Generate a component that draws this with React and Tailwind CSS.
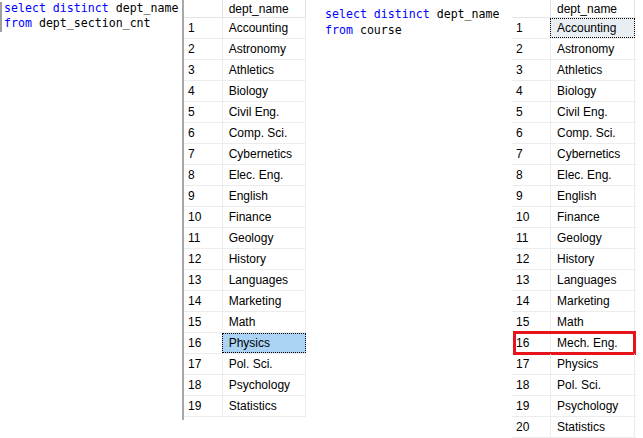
import React from "react";

const leftRows = [
  "Accounting", "Astronomy", "Athletics", "Biology", "Civil Eng.", "Comp. Sci.",
  "Cybernetics", "Elec. Eng.", "English", "Finance", "Geology", "History",
  "Languages", "Marketing", "Math", "Physics", "Pol. Sci.", "Psychology", "Statistics",
];

const rightRows = [
  "Accounting", "Astronomy", "Athletics", "Biology", "Civil Eng.", "Comp. Sci.",
  "Cybernetics", "Elec. Eng.", "English", "Finance", "Geology", "History",
  "Languages", "Marketing", "Math", "Mech. Eng.", "Physics", "Pol. Sci.",
  "Psychology", "Statistics",
];

const mono = { fontFamily: '"DejaVu Sans Mono", "Liberation Mono", monospace' };

const ResultGrid = ({ rows, selected, selectedStyle, marked, withEdge }) => {
  return (
    <div className={`flex flex-col ${withEdge ? "border-l-2 border-[#a9a9a9] pb-[3px]" : ""}`}>
      <div className="flex h-[18px] border-b border-[#e4e4e4]">
        <div className="w-[38px]" />
        <div className="w-[85px] pl-[6px] flex items-center border-l border-r border-[#e4e4e4]">
          dept_name
        </div>
      </div>
      {rows.map((name, i) => (
        <div key={i} className="relative flex h-[21px] border-b border-[#ececec]">
          <div className="w-[38px] pl-[4px] flex items-center">{i + 1}</div>
          <div
            className={`w-[85px] pl-[6px] flex items-center border-l border-r border-[#ececec] ${
              selected === i ? selectedStyle : ""
            }`}
          >
            {name}
          </div>
          {marked === i && (
            <div className="absolute -top-[2px] -bottom-[2px] left-[1px] right-[0px] border-[3px] border-[#e8141c]" />
          )}
        </div>
      ))}
    </div>
  );
}

export default function App() {
  return (
    <div
      className="w-[643px] h-[438px] overflow-hidden bg-white text-black flex text-[12px]"
      style={{ fontFamily: '"Liberation Sans", Arial, sans-serif' }}
    >
      {/* left query */}
      <div className="w-[182px] flex pt-[1px]">
        <div className="w-[2px] h-[30px] mt-[1px] bg-[#a0a0a0]" />
        <div className="pl-[2px] text-[11.6px] leading-[15px]" style={mono}>
          <div>
            <span className="text-[#0000ff]">select distinct</span> dept_name
          </div>
          <div>
            <span className="text-[#0000ff]">from</span> dept_section_cnt
          </div>
        </div>
      </div>

      <div className="w-[124px]">
        <ResultGrid
          rows={leftRows}
          selected={15}
          selectedStyle="bg-[#aad3f5] border border-dotted border-black"
          withEdge
        />
      </div>

      {/* right query */}
      <div className="w-[206px] pl-[19px] pt-[6px] text-[11.6px] leading-[16px]" style={mono}>
        <div>
          <span className="text-[#0000ff]">select distinct</span> dept_name
        </div>
        <div>
          <span className="text-[#0000ff]">from</span> course
        </div>
      </div>

      <div className="w-[124px]">
        <ResultGrid
          rows={rightRows}
          selected={0}
          selectedStyle="bg-[#e9eef3] border border-dotted border-black"
          marked={15}
        />
      </div>
    </div>
  );
}
